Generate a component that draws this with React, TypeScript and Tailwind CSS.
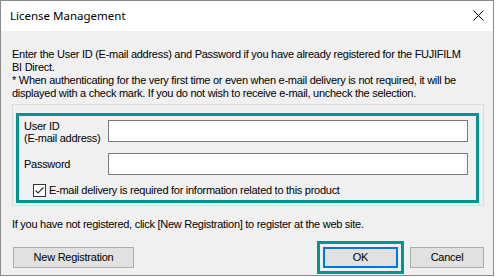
export default function App() {
  return (
    <div className="w-[496px] h-[277px] bg-white">
      <div className="w-[494px] h-[276px] border border-[#8a8a8a] flex flex-col">
        {/* title bar */}
        <div className="h-[30px] bg-white flex items-center justify-between pl-[9px] pr-[9px]">
          <span className="text-[11.5px] text-black font-['Noto_Sans',sans-serif]">
            License Management
          </span>
          <svg width="11" height="11" viewBox="0 0 11 11" className="mt-[-1px]">
            <path d="M0.5 0.5 L10.5 10.5 M10.5 0.5 L0.5 10.5" stroke="#000" strokeWidth="1" />
          </svg>
        </div>

        {/* body */}
        <div className="flex-1 bg-[#f0f0f0] pl-[11px] pr-[9px] pt-[17px] text-[11px] leading-[13px] tracking-[-0.27px] text-black font-['Liberation_Sans',Arial,sans-serif]">
          <p className="whitespace-nowrap">
            Enter the User ID (E-mail address) and Password if you have already registered for the FUJIFILM
            <br />
            BI Direct.
          </p>
          <p className="whitespace-nowrap">
            * When authenticating for the very first time or even when e-mail delivery is not required, it will be
            <br />
            displayed with a check mark. If you do not wish to receive e-mail, uncheck the selection.
          </p>

          <div className="mt-[4px] border border-[#dcdcdc] pt-[8px] pb-[2px] pl-[3px] pr-[4px]">
            <div className="border-[3px] border-[#009690] pt-[4px] pb-[3px] pl-[3px] pr-[8px]">
              <div className="flex">
                <div className="w-[86px] pl-[2px] leading-[12px]">
                  User ID
                  <br />
                  (E-mail address)
                </div>
                <div className="flex-1 h-[22px] bg-white border border-[#7a7a7a]" />
              </div>
              <div className="flex items-center mt-[9px]">
                <div className="w-[86px] pl-[2px]">Password</div>
                <div className="flex-1 h-[22px] bg-white border border-[#7a7a7a]" />
              </div>
              <div className="flex items-center mt-[9px] pl-[11px] gap-[3px] leading-[13px]">
                <div className="w-[13px] h-[13px] bg-white border border-[#333] flex items-center justify-center">
                  <svg width="11" height="11" viewBox="0 0 11 11">
                    <path d="M1.5 5.5 L4 8 L9.5 2.5" stroke="#333" strokeWidth="1.2" fill="none" />
                  </svg>
                </div>
                <span>E-mail delivery is required for information related to this product</span>
              </div>
            </div>
          </div>

          <p className="mt-[12px]">
            If you have not registered, click [New Registration] to register at the web site.
          </p>

          <div className="mt-[10px] flex items-center">
            <button className="ml-[1px] w-[121px] h-[21px] bg-[#e1e1e1] border border-[#adadad] text-[11px] tracking-[-0.25px]">
              New Registration
            </button>
            <div className="flex-1" />
            <div className="border-[3px] border-[#009690] p-[3px]">
              <button className="w-[75px] h-[21px] bg-[#e1e1e1] border-2 border-[#0078d7] text-[11px]">
                OK
              </button>
            </div>
            <button className="ml-[6px] w-[74px] h-[21px] bg-[#e1e1e1] border border-[#adadad] text-[11px] tracking-[-0.25px]">
              Cancel
            </button>
          </div>
        </div>
      </div>
    </div>
  );
}
